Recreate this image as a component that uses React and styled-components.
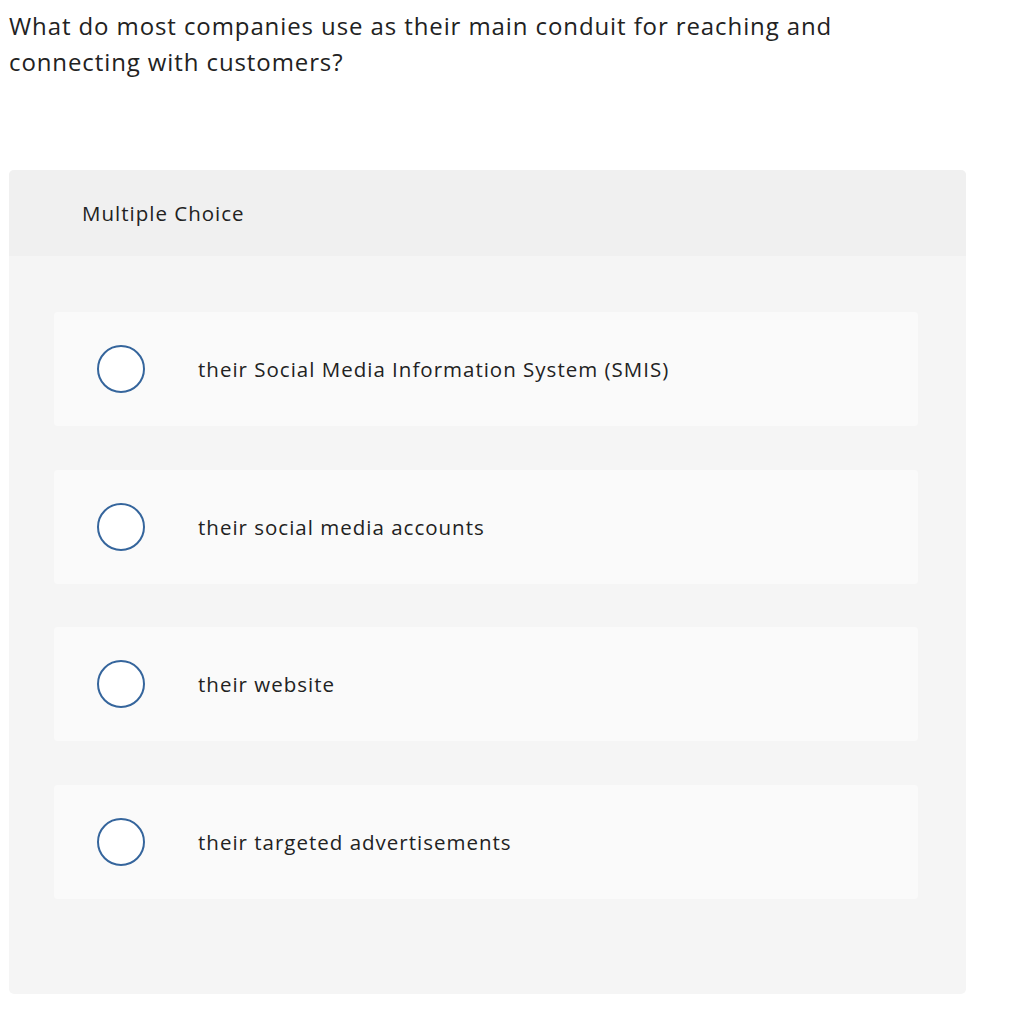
import styled, { createGlobalStyle } from "styled-components";

const GlobalStyle = createGlobalStyle`
  html, body {
    margin: 0;
    padding: 0;
    background: #ffffff;
  }
  body {
    font-family: "Open Sans", "Liberation Sans", sans-serif;
    color: #222222;
  }
`;

const Page = styled.div`
  width: 1022px;
  padding: 8px 0 0 9px;
  box-sizing: border-box;
`;

const Question = styled.p`
  margin: 0;
  font-size: 24px;
  letter-spacing: 0.9px;
  line-height: 36px;
  color: #222222;
  max-width: 860px;
`;

const Panel = styled.section`
  margin-top: 90px;
  width: 957px;
  background-color: #f5f5f5;
  border-radius: 5px;
  overflow: hidden;
  padding-bottom: 95px;
`;

const PanelHeader = styled.div`
  background-color: #f0f0f0;
  height: 86px;
  display: flex;
  align-items: center;
  padding-left: 73px;
  font-size: 20.5px;
  letter-spacing: 1px;
  color: #222222;
`;

const Options = styled.div`
  display: flex;
  flex-direction: column;
  gap: 43.5px;
  padding: 56px 48px 0 45px;
`;

const Option = styled.label`
  display: flex;
  align-items: center;
  height: 114px;
  background-color: #fafafa;
  border-radius: 4px;
  padding-left: 43px;
  cursor: pointer;
`;

const Radio = styled.span`
  width: 48px;
  height: 48px;
  box-sizing: border-box;
  border-radius: 50%;
  border: 2px solid #35659c;
  background-color: #ffffff;
  flex-shrink: 0;
`;

const OptionText = styled.span`
  margin-left: 53px;
  font-size: 20.5px;
  letter-spacing: 1px;
  color: #222222;
`;

const choices = [
  "their Social Media Information System (SMIS)",
  "their social media accounts",
  "their website",
  "their targeted advertisements",
];

export default function App() {
  return (
    <>
      <GlobalStyle />
      <Page>
        <Question>
          What do most companies use as their main conduit for reaching and
          connecting with customers?
        </Question>
        <Panel>
          <PanelHeader>Multiple Choice</PanelHeader>
          <Options>
            {choices.map((c) => (
              <Option key={c}>
                <Radio />
                <OptionText>{c}</OptionText>
              </Option>
            ))}
          </Options>
        </Panel>
      </Page>
    </>
  );
}
